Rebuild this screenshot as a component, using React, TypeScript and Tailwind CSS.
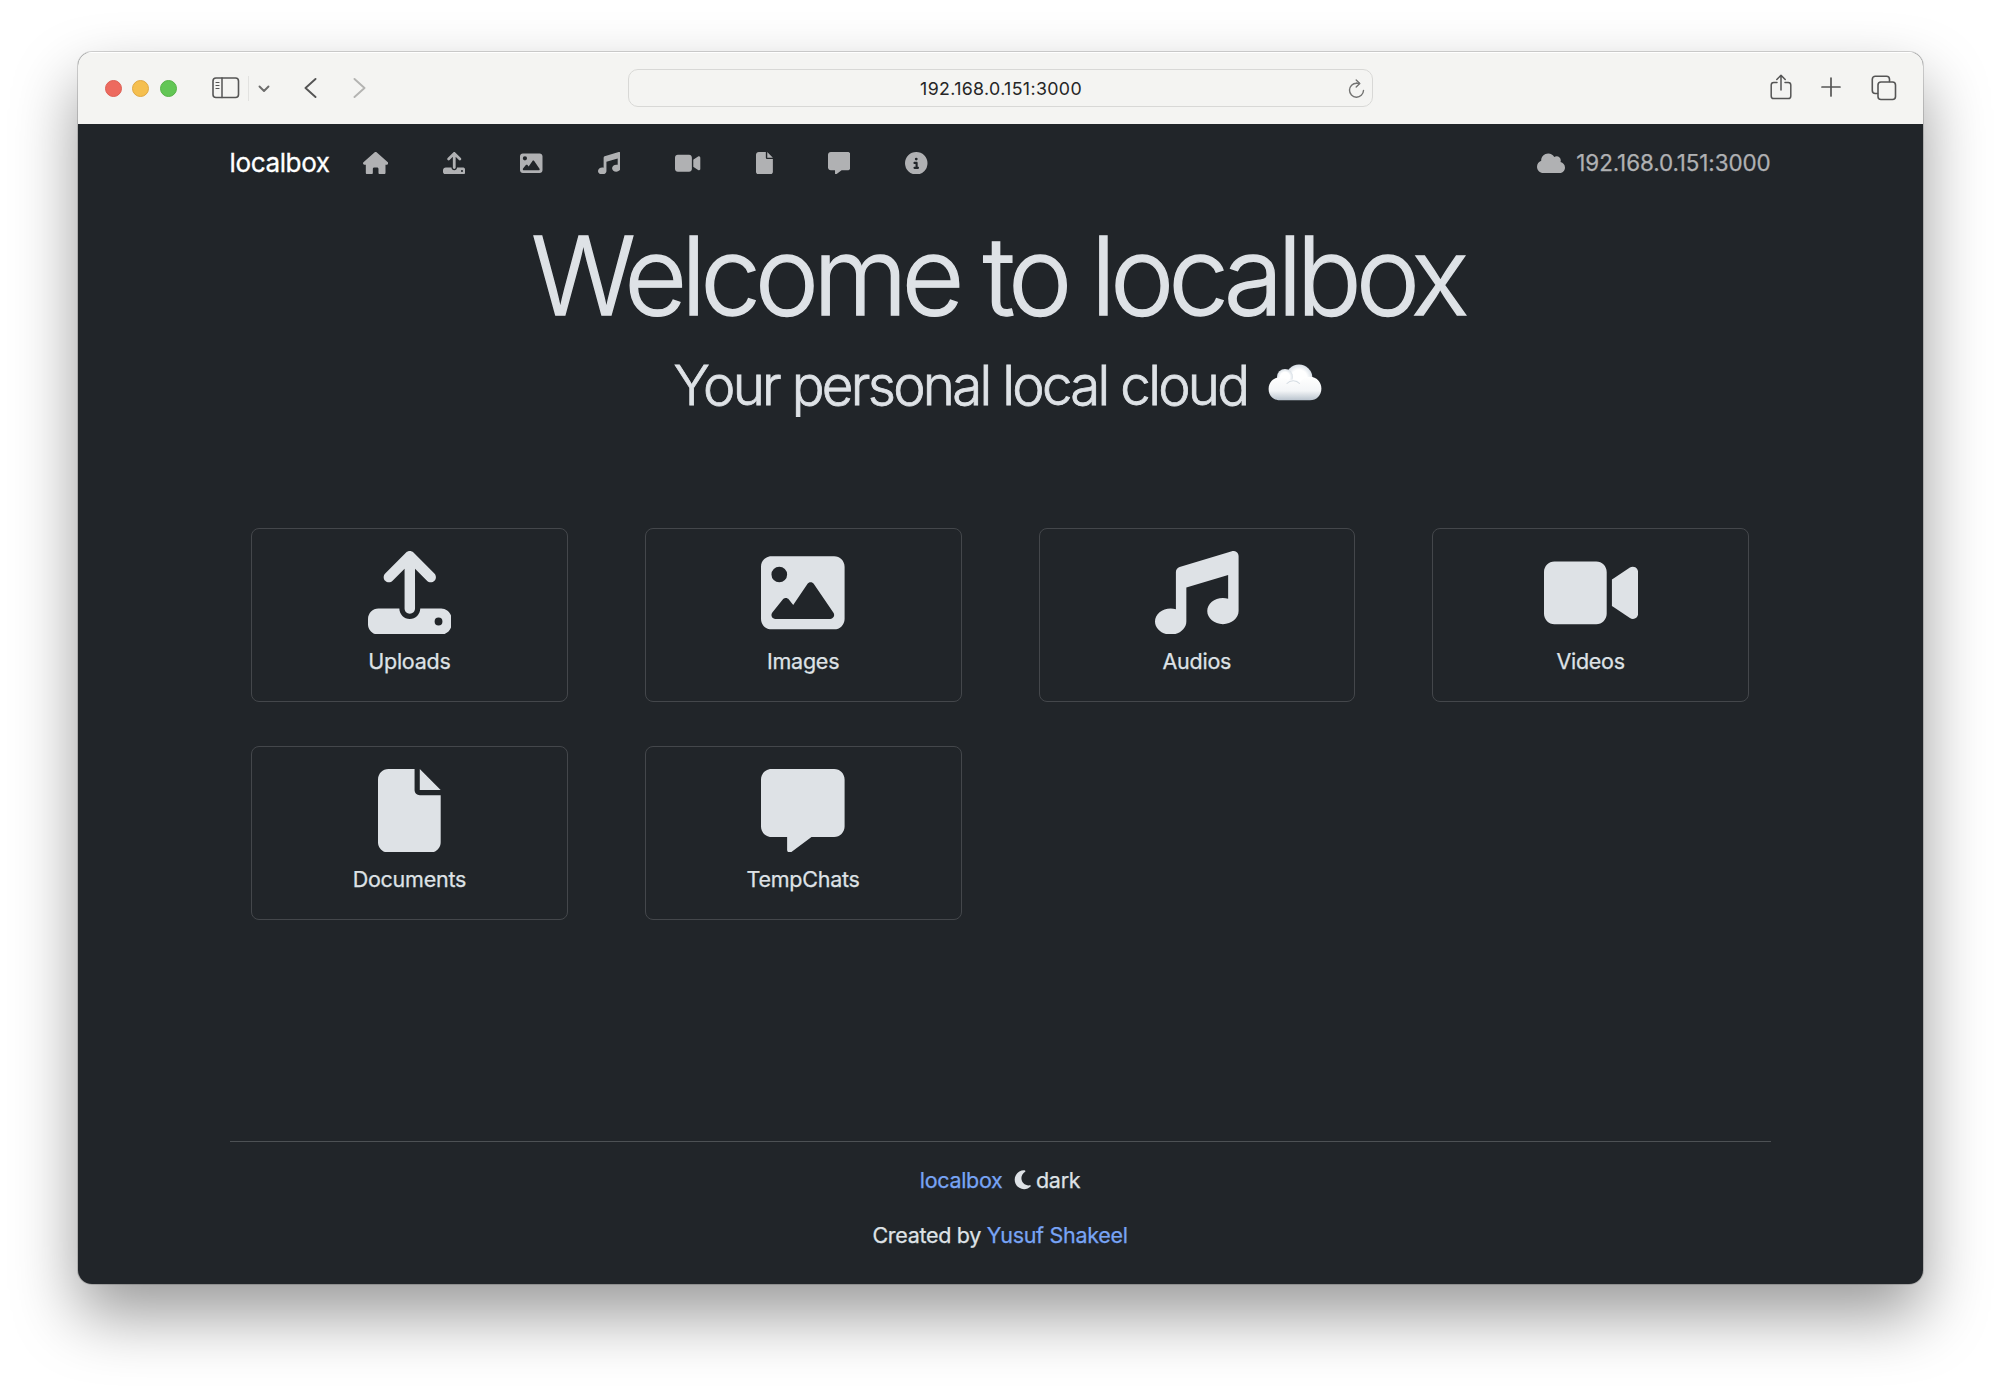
import type { ReactNode } from "react";
import type { IconType } from "react-icons";
import {
  FaCircleInfo,
  FaCloud,
  FaFile,
  FaHouse,
  FaImage,
  FaMessage,
  FaMoon,
  FaMusic,
  FaUpload,
  FaVideo,
} from "react-icons/fa6";

const navIcons: { name: string; Icon: IconType; width: string }[] = [
  { name: "Home", Icon: FaHouse, width: "w-[1.125em]" },
  { name: "Uploads", Icon: FaUpload, width: "w-[1em]" },
  { name: "Images", Icon: FaImage, width: "w-[1em]" },
  { name: "Audios", Icon: FaMusic, width: "w-[1em]" },
  { name: "Videos", Icon: FaVideo, width: "w-[1.125em]" },
  { name: "Documents", Icon: FaFile, width: "w-[0.75em]" },
  { name: "TempChats", Icon: FaMessage, width: "w-[1em]" },
  { name: "About", Icon: FaCircleInfo, width: "w-[1em]" },
];

const cards: { label: string; Icon: IconType; width: string }[] = [
  { label: "Uploads", Icon: FaUpload, width: "w-[1em]" },
  { label: "Images", Icon: FaImage, width: "w-[1em]" },
  { label: "Audios", Icon: FaMusic, width: "w-[1em]" },
  { label: "Videos", Icon: FaVideo, width: "w-[1.125em]" },
  { label: "Documents", Icon: FaFile, width: "w-[0.75em]" },
  { label: "TempChats", Icon: FaMessage, width: "w-[1em]" },
];

function Glyph({ w, h, className, children }: { w: number; h: number; className: string; children: ReactNode }) {
  return (
    <svg
      width={w}
      height={h}
      viewBox={`0 0 ${w} ${h}`}
      fill="none"
      stroke="currentColor"
      strokeLinecap="round"
      strokeLinejoin="round"
      className={`shrink-0 ${className}`}
    >
      {children}
    </svg>
  );
}

function Toolbar() {
  return (
    <div className="grid h-[72px] shrink-0 grid-cols-[1fr_745px_1fr] items-center border-t border-white bg-[#f4f4f2] text-[#555]">
      <div className="flex items-center pl-[27px]">
        <div className="flex gap-[10.6px]">
          <span className="size-[17px] rounded-full border border-[#dd6055] bg-[#ed6a5f]" />
          <span className="size-[17px] rounded-full border border-[#e0a842] bg-[#f5bf4f]" />
          <span className="size-[17px] rounded-full border border-[#57b348] bg-[#62c655]" />
        </div>
        <Glyph w={28} h={22} className="mb-[2px] ml-[35px]">
          <rect x="1" y="1" width="25.5" height="19.5" rx="3" strokeWidth="1.6" />
          <path d="M10 1V20.5" strokeWidth="1.5" />
          <path d="M4 5.5H7M4 8.5H7M4 11.5H7" strokeWidth="1.2" />
        </Glyph>
        <span className="ml-[8px] h-[25px] w-px bg-[#e2e2e0]" />
        <Glyph w={12} h={8} className="ml-[9px] text-[#6c6c6b]">
          <path d="M1.5 1.5L6 6L10.5 1.5" strokeWidth="1.9" />
        </Glyph>
        <Glyph w={13} h={20} className="mb-[2px] ml-[34px]">
          <path d="M11.5 1L1.5 10L11.5 19" strokeWidth="1.9" />
        </Glyph>
        <Glyph w={13} h={20} className="mb-[2px] ml-[36.5px] text-[#b4b4b2]">
          <path d="M1.5 1L11.5 10L1.5 19" strokeWidth="1.9" />
        </Glyph>
      </div>
      <div className="mb-[1px] flex h-[38px] items-center rounded-[10px] border border-[#d8d8d6] pr-[7px]">
        <span className="mt-[2px] ml-[26px] flex-1 text-center text-[17.8px] tracking-[0.35px] text-[#262626]">192.168.0.151:3000</span>
        <Glyph w={17} h={20} className="mt-[1px] text-[#737372]">
          <path d="M8.5 4.2A7 7 0 1 0 15.5 11.5" strokeWidth="1.4" />
          <path d="M8.2 1L11.8 4.5L8.2 8" strokeWidth="1.4" />
          <path d="M8.5 4.3H11" strokeWidth="1.4" />
        </Glyph>
      </div>
      <div className="flex items-center justify-end pr-[26px]">
        <Glyph w={22} h={26} className="mb-[3px]">
          <path d="M7 8.5H3.8A2.6 2.6 0 0 0 1.2 11.1V21.9A2.6 2.6 0 0 0 3.8 24.5H18.2A2.6 2.6 0 0 0 20.8 21.9V11.1A2.6 2.6 0 0 0 18.2 8.5H15" strokeWidth="1.5" />
          <path d="M11 16V1.5M6.8 5.5L11 1.2L15.2 5.5" strokeWidth="1.5" />
        </Glyph>
        <Glyph w={20} h={20} className="mb-[3px] ml-[29px]">
          <path d="M10 1V19M1 10H19" strokeWidth="1.7" />
        </Glyph>
        <Glyph w={26} h={26} className="mb-[2px] ml-[30px]">
          <rect x="7" y="7" width="17.5" height="17.5" rx="3" strokeWidth="1.6" />
          <path d="M6.5 18.5H4.3A3 3 0 0 1 1.3 15.5V4.3A3 3 0 0 1 4.3 1.3H15.5A3 3 0 0 1 18.5 4.3V6.5" strokeWidth="1.6" />
        </Glyph>
      </div>
    </div>
  );
}

function CloudEmoji() {
  return (
    <svg width="54" height="37" viewBox="0 0 54 37" className="mb-[5px] ml-[21px] shrink-0">
      <defs>
        <linearGradient id="cloudBody" x1="0" y1="0" x2="0" y2="1">
          <stop offset="0" stopColor="#ffffff" />
          <stop offset="0.6" stopColor="#f3f5f7" />
          <stop offset="1" stopColor="#b9c3cd" />
        </linearGradient>
        <radialGradient id="cloudPuff" cx="0.5" cy="0.5" r="0.5">
          <stop offset="0.6" stopColor="#ffffff" />
          <stop offset="1" stopColor="#d8dfe6" />
        </radialGradient>
      </defs>
      <circle cx="31" cy="14" r="13.4" fill="url(#cloudPuff)" />
      <circle cx="17" cy="13" r="8" fill="url(#cloudPuff)" />
      <path
        d="M12 36.3C5 36.3 0.6 31.5 0.6 25C0.6 18.5 5.5 13.3 12 13.3C15.5 13.3 18 14.3 20 16.5C24 14.8 29 15 32 18C34.5 14.5 38 12.8 42 12.8C48.5 12.8 53.4 18 53.4 24.5C53.4 31.5 48.5 36.3 42 36.3Z"
        fill="url(#cloudBody)"
      />
      <path d="M19 19.5C22 16 28 15.5 31.5 19.5" fill="none" stroke="#d5dce3" strokeWidth="1.1" strokeLinecap="round" />
    </svg>
  );
}

function Navbar() {
  return (
    <nav className="flex h-[78px] items-center text-[22.4px] text-[#b0b1b3]">
      <a className="w-[133px] text-[26.1px] tracking-[-0.4px] text-white [-webkit-text-stroke:0.3px]">localbox</a>
      <div className="flex items-center gap-[55px] text-[22.5px]">
        {navIcons.map(({ name, Icon, width }) => (
          <a key={name} aria-label={name}>
            <Icon className={`h-[1em] shrink-0 ${width}`} />
          </a>
        ))}
      </div>
      <div className="ml-auto flex items-center">
        <FaCloud className="h-[1em] w-[1.25em]" />
        <span className="ml-[11px] tracking-[-0.1px] [-webkit-text-stroke:0.25px]">192.168.0.151:3000</span>
      </div>
    </nav>
  );
}

export default function App() {
  return (
    <div className="flex h-[1387px] w-[2000px] justify-center overflow-hidden bg-white pt-[52px] font-['Inter',sans-serif]">
      <div className="flex h-[1232px] w-[1845px] flex-col overflow-hidden rounded-[14px] bg-[#212529] shadow-[0_0_0_1px_rgba(0,0,0,0.16),0_31px_65px_rgba(0,0,0,0.4)]">
        <Toolbar />
        <div className="mx-auto flex w-[1541px] flex-1 flex-col text-[#dee2e6]">
          <Navbar />
          <header className="flex flex-col items-center">
            <h1 className="mt-[9px] pr-[6px] text-[108.5px] leading-[130px] font-light tracking-[-6.1px] whitespace-nowrap [-webkit-text-stroke:1.3px]">
              Welcome to localbox
            </h1>
            <h2 className="mt-[11px] flex h-[66px] items-center pr-[4px] text-[54.6px] leading-[66px] font-light tracking-[-2.7px] whitespace-nowrap [-webkit-text-stroke:0.8px]">
              Your personal local cloud
              <CloudEmoji />
            </h2>
          </header>
          <main className="mt-[110px] grid grid-cols-4 gap-x-[77px] gap-y-[44px] px-[21.5px]">
            {cards.map(({ label, Icon, width }) => (
              <a key={label} className="flex h-[174px] flex-col items-center rounded-[8px] border border-[#44474b] pt-[21.5px]">
                <Icon className={`h-[1em] shrink-0 text-[83.6px] ${width}`} />
                <span className="mt-[9.5px] text-[21.5px] leading-[34px] tracking-[-0.25px] [-webkit-text-stroke:0.25px]">{label}</span>
              </a>
            ))}
          </main>
          <footer className="mt-auto flex h-[143px] flex-col items-center border-t border-[#4d5154] text-[21.5px] leading-[32px] tracking-[-0.3px] [-webkit-text-stroke:0.25px]">
            <p className="mt-[22px] flex items-center">
              <a className="text-[#78a4f5]">localbox</a>
              <FaMoon className="ml-[9px] h-[21.5px] w-[21.5px]" />
              <span className="ml-[3px]">dark</span>
            </p>
            <p className="mt-[23px]">
              Created by <a className="text-[#78a4f5]">Yusuf Shakeel</a>
            </p>
          </footer>
        </div>
      </div>
    </div>
  );
}
